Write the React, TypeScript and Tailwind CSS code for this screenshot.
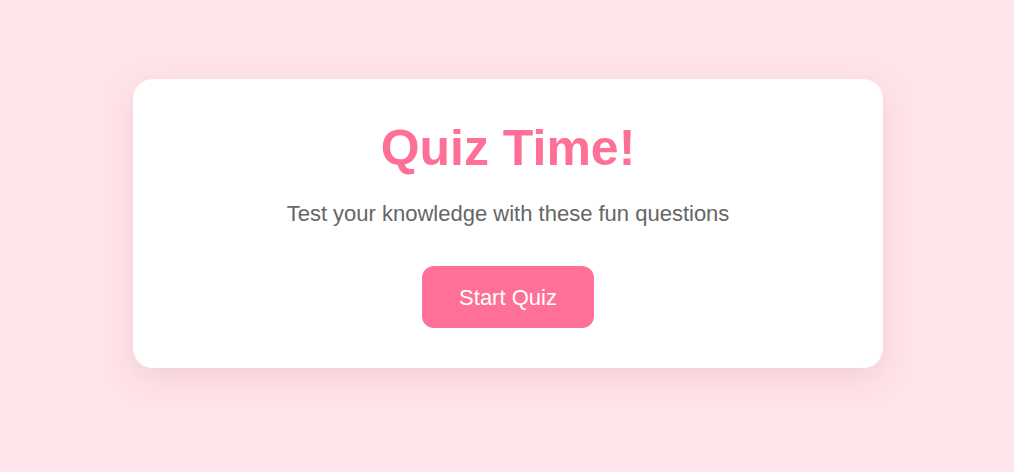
export default function App() {
    return (
        <div className="w-full h-[472px] bg-[#ffe4ea] flex justify-center pt-[79px] pl-[2px]">
            <div className="w-[750px] h-[289px] bg-white rounded-[20px] shadow-[0_10px_30px_rgba(200,120,140,0.2)] flex flex-col items-center pt-[40px] font-['Liberation_Sans',Arial,sans-serif]">
                <h1 className="text-[50px] leading-[58px] font-bold text-[#ff7096]">Quiz Time!</h1>
                <p className="mt-[24px] text-[22px] leading-[25px] text-[#666666]">Test your knowledge with these fun questions</p>
                <button className="mt-[40px] w-[172px] h-[62px] rounded-[12px] bg-[#ff7096] text-white text-[22px] leading-[25px] flex items-center justify-center">
                    Start Quiz
                </button>
            </div>
        </div>
    )
}
